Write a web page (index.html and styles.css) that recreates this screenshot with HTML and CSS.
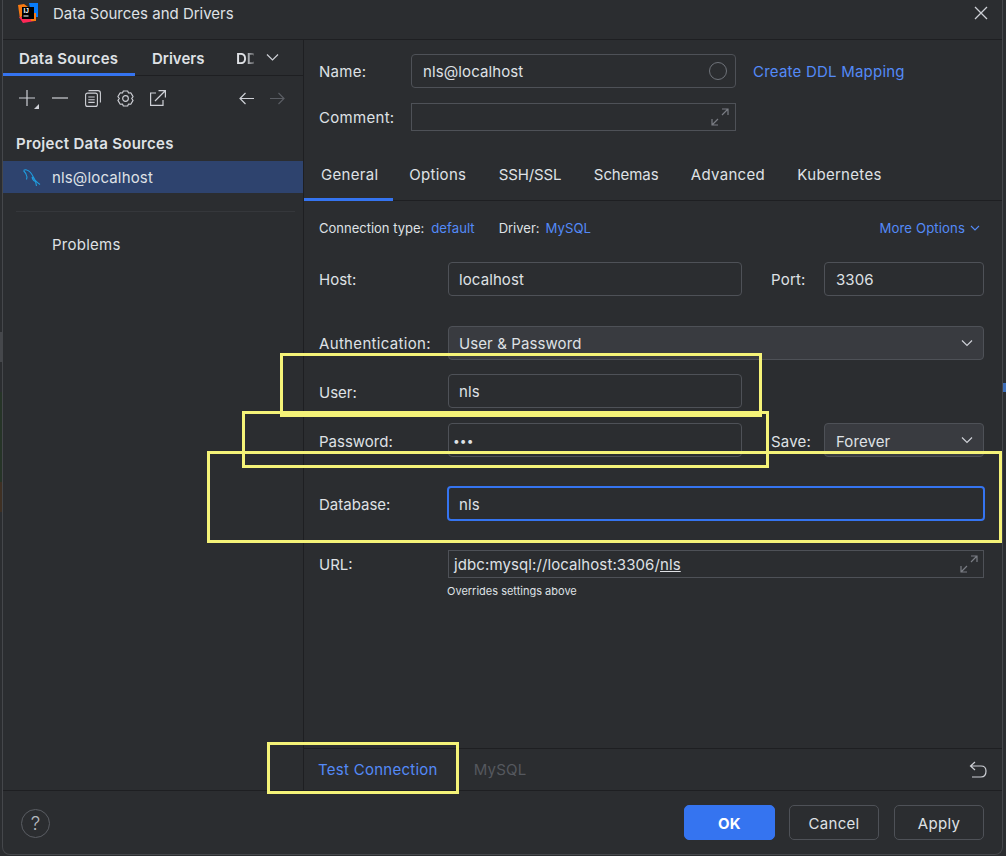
FILE: index.html
```html
<!DOCTYPE html>
<html lang="en">
<head>
<meta charset="utf-8">
<title>Data Sources and Drivers</title>
<link rel="stylesheet" href="styles.css">
</head>
<body>
<div class="dialog">
  <header class="titlebar">
    <svg class="logo" width="20" height="20" viewBox="0 0 20 20">
      <path d="M0 2 L6 1 L10 4 L2 16 Z" fill="#f97a12"/>
      <path d="M11 0 L20 0 L20 14 L14 14 Z" fill="#087cfa"/>
      <path d="M1 14 L10 14 L17 18 L5 20 Z" fill="#fe2857"/>
      <path d="M12 10 L18 10 L18 18 L13 18 Z" fill="#f97a12"/>
      <rect x="4" y="4" width="12" height="12" fill="#000"/>
      <text x="5.5" y="10" class="logo-text">IJ</text>
      <rect x="5.5" y="12.5" width="5" height="1" fill="#fff"/>
    </svg>
    <span class="title">Data Sources and Drivers</span>
    <svg class="close" width="14" height="14" viewBox="0 0 14 14"><path d="M1 1 L13 13 M13 1 L1 13" stroke="#ced0d6" stroke-width="1.3" fill="none"/></svg>
  </header>
  <div class="body">
    <aside class="side">
      <nav class="side-tabs">
        <span class="side-tab active">Data Sources</span>
        <span class="side-tab drivers">Drivers</span>
        <span class="side-tab clipped">DDL</span>
        <svg class="chev-side" width="13" height="13" viewBox="0 0 13 13"><path d="M1 3.5 L6.5 9 L12 3.5" stroke="#ced0d6" stroke-width="1.2" fill="none"/></svg>
      </nav>
      <div class="toolbar">
        <svg class="plus" width="20" height="19" viewBox="0 0 20 19"><path d="M8 0 V16 M0 8 H16" stroke="#ced0d6" stroke-width="1.2" fill="none"/><path d="M20 14 V19 H15 Z" fill="#ced0d6"/></svg>
        <svg width="16" height="16" viewBox="0 0 16 16"><path d="M0 8 H16" stroke="#ced0d6" stroke-width="1.2"/></svg>
        <svg width="16" height="17" viewBox="0 0 16 17"><rect x="0.6" y="3.1" width="11.8" height="13.3" rx="2" stroke="#ced0d6" fill="none" stroke-width="1.1"/><path d="M3.5 0.6 H13 Q15.4 0.6 15.4 3 V12.5 M3.3 7 H9.7 M3.3 9.7 H9.7 M3.3 12.4 H9.7" stroke="#ced0d6" fill="none" stroke-width="1.1"/></svg>
        <svg class="gear" width="17" height="17" viewBox="0 0 18 18"><path d="M6.7 1 H11.3 L12.2 3.2 L14.6 2.9 L17 7 L15.5 9 L17 11 L14.6 15.1 L12.2 14.8 L11.3 17 H6.7 L5.8 14.8 L3.4 15.1 L1 11 L2.5 9 L1 7 L3.4 2.9 L5.8 3.2 Z" stroke="#ced0d6" fill="none" stroke-width="1.2" stroke-linejoin="round"/><circle cx="9" cy="9" r="3" stroke="#ced0d6" fill="none" stroke-width="1.2"/></svg>
        <svg width="16" height="16" viewBox="0 0 16 16"><path d="M6 3 H0.6 V15.4 H13 V10 M5 11 L15 1 M8.5 0.6 H15.4 V7.5" stroke="#ced0d6" fill="none" stroke-width="1.2"/></svg>
        <span class="toolbar-space"></span>
        <svg width="15" height="13" viewBox="0 0 15 13"><path d="M15 6.5 H1 M6.5 1 L1 6.5 L6.5 12" stroke="#ced0d6" fill="none" stroke-width="1.2"/></svg>
        <svg width="15" height="13" viewBox="0 0 15 13"><path d="M0 6.5 H14 M8.5 1 L14 6.5 L8.5 12" stroke="#5a5d63" fill="none" stroke-width="1.2"/></svg>
      </div>
      <h2 class="group">Project Data Sources</h2>
      <div class="source">
        <svg width="18" height="18" viewBox="0 0 18 18"><path d="M0.5 2.5 C2 1.5 5 1.5 7.5 4.5 C10 7.5 10.5 10 12 12 C13 13.5 15 15 17 16.5 M0.5 2.5 C2 4 3.5 6 4 9 M4 9 L3.5 11.5 M9 9 C9.5 11 10.5 13 12.5 13.5 L13.5 18" stroke="#1f9ee0" fill="none" stroke-width="1.1"/></svg>
        <span>nls@localhost</span>
      </div>
      <hr class="side-sep">
      <div class="problems">Problems</div>
    </aside>
    <main class="panel">
      <div class="head">
        <div class="head-row">
          <label class="head-label">Name:</label>
          <div class="field name-field"><span>nls@localhost</span><i class="ring"></i></div>
          <a class="link mapping">Create DDL Mapping</a>
        </div>
        <div class="head-row comment-row">
          <label class="head-label">Comment:</label>
          <div class="field square comment-field">
            <svg class="expand" width="18" height="18" viewBox="0 0 18 18"><path d="M1 17 L7 11 M1 11 V17 H7 M17 1 L11 7 M11 1 H17 V7" stroke="#7a7d84" fill="none" stroke-width="1.2"/></svg>
          </div>
        </div>
      </div>
      <nav class="tabs">
        <span class="tab active">General</span>
        <span class="tab">Options</span>
        <span class="tab tight">SSH/SSL</span>
        <span class="tab tight">Schemas</span>
        <span class="tab">Advanced</span>
        <span class="tab">Kubernetes</span>
      </nav>
      <div class="form">
        <div class="meta">
          <span class="meta-label">Connection type:</span>
          <a class="link small">default</a>
          <span class="meta-label driver">Driver:</span>
          <a class="link small2">MySQL</a>
          <a class="link small more">More Options
            <svg width="10" height="10" viewBox="0 0 10 10"><path d="M1 3 L5 7 L9 3" stroke="#548af7" fill="none" stroke-width="1.1"/></svg>
          </a>
        </div>
        <div class="row host-row">
          <label>Host:</label>
          <div class="field grow"><span>localhost</span></div>
          <label class="aux">Port:</label>
          <div class="field aux-field"><span>3306</span></div>
        </div>
        <div class="row auth-row">
          <label class="auth-label">Authentication:</label>
          <div class="field combo wide"><span>User &amp; Password</span>
            <svg class="chev" width="12" height="12" viewBox="0 0 12 12"><path d="M1 3.5 L6 8.5 L11 3.5" stroke="#ced0d6" fill="none" stroke-width="1.2"/></svg>
          </div>
        </div>
        <div class="row user-row nudged">
          <label>User:</label>
          <div class="field grow"><span class="plain">nls</span></div>
        </div>
        <div class="row pass-row nudged">
          <label>Password:</label>
          <div class="field grow pass"><span class="plain">•••</span></div>
          <label class="aux">Save:</label>
          <div class="field combo aux-field"><span>Forever</span>
            <svg class="chev" width="12" height="12" viewBox="0 0 12 12"><path d="M1 3.5 L6 8.5 L11 3.5" stroke="#ced0d6" fill="none" stroke-width="1.2"/></svg>
          </div>
        </div>
        <div class="row db-row nudged">
          <label>Database:</label>
          <div class="field focused"><span>nls</span></div>
        </div>
        <div class="row url-row">
          <label>URL:</label>
          <div class="field square url-field"><span>jdbc:mysql://localhost:3306/<u>nls</u></span>
            <svg class="expand" width="18" height="18" viewBox="0 0 18 18"><path d="M1 17 L7 11 M1 11 V17 H7 M17 1 L11 7 M11 1 H17 V7" stroke="#7a7d84" fill="none" stroke-width="1.2"/></svg>
          </div>
        </div>
        <p class="hint">Overrides settings above</p>
      </div>
      <div class="testbar">
        <a class="link test">Test Connection</a>
        <span class="driver-muted">MySQL</span>
        <svg class="undo" width="18" height="17" viewBox="0 0 18 17"><path d="M6 1 L1.5 5 L6 9 M2 5 H12 Q17 5 17 10 Q17 16 12 16 H3" stroke="#ced0d6" fill="none" stroke-width="1.2"/></svg>
      </div>
    </main>
  </div>
  <footer class="footer">
    <span class="help">?</span>
    <button class="btn primary">OK</button>
    <button class="btn cancel">Cancel</button>
    <button class="btn">Apply</button>
  </footer>
  <i class="mark mark-user"></i>
  <i class="mark mark-pass"></i>
  <i class="mark mark-db"></i>
  <i class="mark mark-test"></i>
</div>
<i class="edge-glyph"></i>
</body>
</html>
```
FILE: styles.css
```css
* { box-sizing: border-box; }
html, body { margin: 0; height: 100%; }
body {
  position: relative;
  font-family: Inter, "Noto Sans", sans-serif;
  font-size: 15px;
  color: #dfe1e5;
  overflow: hidden;
  background:
    linear-gradient(to bottom, #2b2d30 0 332px, #45474b 332px 362px, #2b2d30 362px 392px, #263427 392px 482px, #3f3023 482px 512px, #2b2d30 512px) 0 0 / 2px 100% no-repeat,
    #2b2d30;
}
.dialog {
  position: relative;
  width: 1001px;
  height: 855px;
  margin-left: 2px;
  display: flex;
  flex-direction: column;
  background: #2b2d30;
  border: 1px solid #45474b;
  border-top: 0;
  border-radius: 0 0 8px 8px;
}
.edge-glyph { position: absolute; left: 1003px; top: 383px; width: 3px; height: 9px; background: #3d6db8; }

.titlebar { height: 40px; flex: none; display: flex; align-items: center; padding: 0 14px 13px 15px; border-bottom: 1px solid #1e1f22; }
.logo { flex: none; }
.logo-text { font: bold 6.5px "Liberation Sans", sans-serif; fill: #fff; }
.title { margin-left: 15px; font-size: 15px; color: #dfe1e5; }
.close { margin-left: auto; }

.body { flex: 1; display: flex; min-height: 0; }
.side { width: 301px; flex: none; border-right: 1px solid #1e1f22; }
.side-tabs { height: 36px; display: flex; align-items: center; border-bottom: 1px solid #1e1f22; }
.side-tab { height: 36px; line-height: 38px; font-weight: 600; font-size: 15px; color: #dfe1e5; white-space: nowrap; }
.side-tab.active { width: 132px; padding-left: 16px; letter-spacing: 0.2px; border-bottom: 3px solid #3574f0; }
.side-tab.drivers { width: 101px; padding-left: 17px; }
.side-tab.clipped { width: 18px; overflow: hidden; -webkit-mask-image: linear-gradient(to right, #000 50%, rgba(0,0,0,.25)); mask-image: linear-gradient(to right, #000 50%, rgba(0,0,0,.25)); }
.chev-side { margin-left: 12px; flex: none; }
.toolbar { height: 44px; display: flex; align-items: center; gap: 16.5px; padding: 0 18px 0 16px; }
.plus { margin-right: -3.5px; margin-top: 3px; }
.gear { margin-right: -0.5px; }
.toolbar-space { flex: 1; }
.group { margin: 0; padding: 15px 0 0 13px; height: 41px; font-size: 15px; font-weight: 600; color: #dfe1e5; line-height: 17px; letter-spacing: 0.3px; }
.source { height: 32px; background: #2e436e; display: flex; align-items: center; gap: 11px; padding-left: 20px; letter-spacing: 0.15px; }
.side-sep { border: 0; border-top: 1px solid #35373b; margin: 18px 8px 0 13px; }
.problems { padding: 23px 0 0 49px; letter-spacing: 0.25px; }

.panel { flex: 1; display: flex; flex-direction: column; min-width: 0; }
.head { padding: 14px 18px 0 15px; height: 116px; flex: none; }
.head-row { display: flex; align-items: center; height: 34px; }
.comment-row { height: 28px; margin-top: 15px; }
.head-label { width: 92px; flex: none; letter-spacing: 0.3px; }
.field { height: 34px; border: 1px solid #4e5157; border-radius: 4px; display: flex; align-items: center; padding: 0 10px; background: #2b2d30; color: #dfe1e5; letter-spacing: 0.1px; }
.field.square { border-radius: 0; }
.name-field { width: 325px; padding: 0 8px 0 11px; justify-content: space-between; }
.ring { width: 18px; height: 18px; border: 1px solid #6f737a; border-radius: 50%; }
.mapping { margin-left: 17px; letter-spacing: 0.22px; }
.comment-field { width: 325px; height: 28px; justify-content: flex-end; padding-right: 6px; }
.expand { flex: none; }
.link { color: #548af7; }

.tabs { height: 45px; flex: none; display: flex; border-bottom: 1px solid #1e1f22; }
.tab { height: 45px; padding: 0 16.2px; line-height: 38px; white-space: nowrap; letter-spacing: 0.3px; }
.tab.tight { letter-spacing: -0.1px; }
.tab.active { width: 89px; padding-left: 17px; border-bottom: 3px solid #3574f0; }

.form { flex: 1; padding: 0 18px 0 15px; min-height: 0; }
.meta { height: 61px; display: flex; align-items: center; font-size: 13px; padding-bottom: 7px; white-space: nowrap; }
.meta-label { color: #dfe1e5; }
.meta .link { font-size: 13.2px; }
.small { margin-left: 7px; }
.driver { margin-left: 24px; }
.small2 { margin-left: 6px; }
.more { margin-left: auto; display: flex; align-items: center; gap: 5px; padding-right: 4px; letter-spacing: 0.1px; }
.row { display: flex; align-items: center; }
.row > label:first-child { width: 129px; flex: none; }
.row > .auth-label:first-child { letter-spacing: 0.33px; }
.grow { width: 294px; flex: none; }
.aux { margin-left: 29px; width: 53px; flex: none; letter-spacing: 0.2px; }
.aux-field { width: 160px; flex: none; padding-left: 11px; }
.wide { flex: 1; }
.combo { background: #393b40; justify-content: space-between; }
.auth-row { margin-top: 30px; }
.user-row { margin-top: 14px; }
.pass-row { margin-top: 15px; }
.nudged label, .nudged .combo span, .nudged .focused span { padding-top: 2px; }
.pass { padding-left: 4px; font-size: 12px; }
.db-row { margin-top: 29px; }
.focused { flex: 1; height: 35px; margin: 0 -1px; border: 2px solid #3574f0; padding: 0 10px; }
.url-row { margin-top: 29px; }
.url-field { flex: 1; height: 28px; padding: 0 5px; justify-content: space-between; }
.url-field span { white-space: nowrap; }
.hint { margin: 6px 0 0 128px; font-size: 11px; line-height: 14px; color: #dfe1e5; }

.testbar { height: 42px; flex: none; display: flex; align-items: center; border-top: 1px solid #1e1f22; padding: 0 15px 0 14px; }
.test { letter-spacing: 0.27px; }
.driver-muted { margin-left: 36px; color: #55585e; letter-spacing: 0.2px; }
.undo { margin-left: auto; }

.footer { height: 64px; flex: none; border-top: 1px solid #1e1f22; display: flex; align-items: center; padding: 0 18px 0 18px; gap: 14px; }
.help { width: 29px; height: 29px; margin-top: 1px; border: 1px solid #5a5d63; border-radius: 50%; display: flex; align-items: center; justify-content: center; font-size: 19px; font-weight: 300; color: #b4b8bf; margin-right: auto; }
.btn { width: 90px; height: 35px; border: 1px solid #4e5157; border-radius: 5px; background: #2b2d30; color: #dfe1e5; font: 15px Inter, "Noto Sans", sans-serif; letter-spacing: 0.3px; padding: 2px 0 0; }
.btn.primary { width: 91px; background: #3574f0; border-color: #3574f0; color: #fff; font-weight: 700; }
.btn.cancel { margin-right: 1px; }

.mark { position: absolute; border: 3px solid #f5f378; pointer-events: none; }
.mark-user { left: 277px; top: 353px; width: 482px; height: 64px; }
.mark-pass { left: 239px; top: 411px; width: 527px; height: 57px; }
.mark-db { left: 204px; top: 451px; width: 795px; height: 92px; }
.mark-test { left: 264px; top: 742px; width: 192px; height: 52px; }
```
